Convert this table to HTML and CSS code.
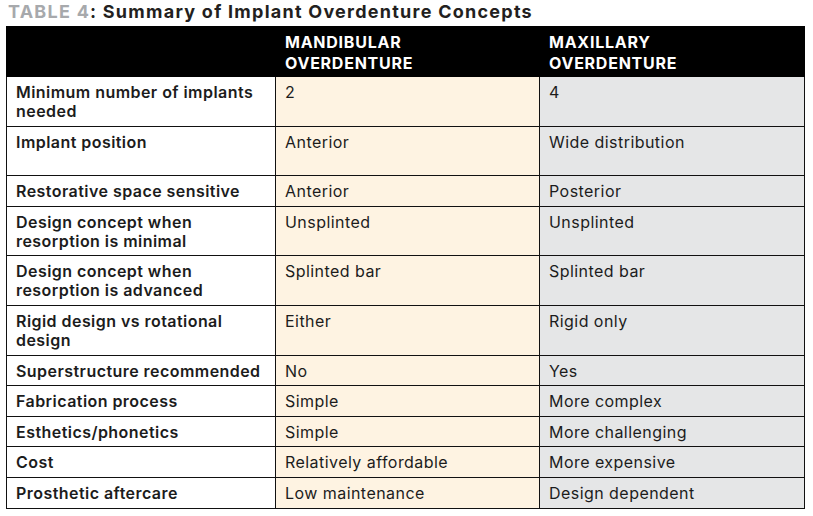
FILE: index.html
```html
<!DOCTYPE html>
<html>
<head>
<meta charset="utf-8">
<link rel="stylesheet" href="styles.css">
</head>
<body>
<h1 class="title"><span class="label">TABLE 4</span>: Summary of Implant Overdenture Concepts</h1>
<table class="summary">
  <colgroup>
    <col class="c1"><col class="c2"><col class="c3">
  </colgroup>
  <thead>
    <tr class="head">
      <th></th>
      <th>MANDIBULAR<br>OVERDENTURE</th>
      <th>MAXILLARY<br>OVERDENTURE</th>
    </tr>
  </thead>
  <tbody>
    <tr class="tall"><th>Minimum number of implants needed</th><td class="mand">2</td><td class="max">4</td></tr>
    <tr class="tall"><th>Implant position</th><td class="mand">Anterior</td><td class="max">Wide distribution</td></tr>
    <tr><th>Restorative space sensitive</th><td class="mand">Anterior</td><td class="max">Posterior</td></tr>
    <tr class="tall"><th>Design concept when resorption is minimal</th><td class="mand">Unsplinted</td><td class="max">Unsplinted</td></tr>
    <tr class="tall"><th>Design concept when resorption is advanced</th><td class="mand">Splinted bar</td><td class="max">Splinted bar</td></tr>
    <tr class="tall"><th>Rigid design vs rotational design</th><td class="mand">Either</td><td class="max">Rigid only</td></tr>
    <tr><th>Superstructure recommended</th><td class="mand">No</td><td class="max">Yes</td></tr>
    <tr><th>Fabrication process</th><td class="mand">Simple</td><td class="max">More complex</td></tr>
    <tr><th>Esthetics/phonetics</th><td class="mand">Simple</td><td class="max">More challenging</td></tr>
    <tr><th>Cost</th><td class="mand">Relatively affordable</td><td class="max">More expensive</td></tr>
    <tr><th>Prosthetic aftercare</th><td class="mand">Low maintenance</td><td class="max">Design dependent</td></tr>
  </tbody>
</table>
</body>
</html>
```

FILE: styles.css
```css
html, body {
  margin: 0;
  padding: 0;
  background: #ffffff;
}

body {
  font-family: "Inter", "Liberation Sans", sans-serif;
  color: #1c1c1c;
}

.title {
  margin: 0;
  padding: 1px 0 0 8px;
  height: 25px;
  font-size: 18px;
  line-height: 21px;
  font-weight: 700;
  letter-spacing: 1.25px;
  color: #231f20;
  white-space: nowrap;
}

.title .label {
  color: #a7a9ac;
}

.summary {
  margin-left: 6px;
  border-collapse: collapse;
  table-layout: fixed;
  width: 798px;
  font-size: 16px;
  line-height: 19px;
  letter-spacing: 0.45px;
}

.c1 { width: 269px; }
.c2 { width: 264px; }
.c3 { width: 265px; }

.summary tr {
  height: 30.6px;
}

.summary tr.tall {
  height: 49.6px;
}

.summary th,
.summary td {
  border: 1.5px solid #111111;
  padding: 6px 9px 2px 9px;
  text-align: left;
  vertical-align: top;
}

.summary tbody th {
  font-weight: 600;
  background: #ffffff;
}

.summary tbody td {
  font-weight: 400;
}

.summary tr.head {
  height: 50px;
}

.head th {
  background: #000000;
  color: #ffffff;
  font-weight: 700;
  line-height: 21px;
  letter-spacing: 0.75px;
  padding: 5px 9px 1px 9px;
  border-color: #000000;
}

.mand { background: #fef3e2; }
.max { background: #e5e6e7; }
```
